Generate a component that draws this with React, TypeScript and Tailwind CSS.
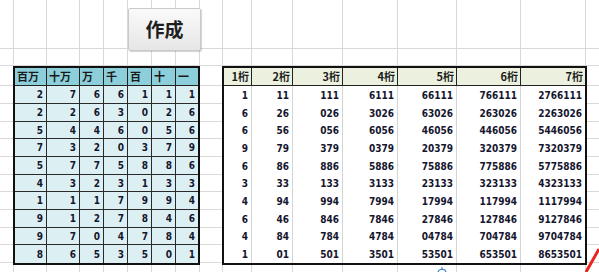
import React from "react";

// spreadsheet column widths (px) — lines sit on the last pixel of each cell
const sheetCols = [
  "w-[14px]", "w-[33px]", "w-[33px]", "w-[24px]", "w-[24px]", "w-[24px]", "w-[24px]", "w-[24px]",
  "w-[23px]", "w-[29px]", "w-[41px]", "w-[50px]", "w-[55px]", "w-[59px]", "w-[64px]", "w-[65px]",
];

const rowH = [
  "h-[18px]", "h-[18px]", "h-[17px]", "h-[18px]", "h-[18px]",
  "h-[17px]", "h-[18px]", "h-[18px]", "h-[17px]", "h-[18px]",
];

const leftCols = ["w-[32px]", "w-[33px]", "w-[24px]", "w-[24px]", "w-[24px]", "w-[24px]", "w-[22px]"];
const leftHead = ["百万", "十万", "万", "千", "百", "十", "一"];
const leftData = [
  [2, 7, 6, 6, 1, 1, 1],
  [2, 2, 6, 3, 0, 2, 6],
  [5, 4, 4, 6, 0, 5, 6],
  [7, 3, 2, 0, 3, 7, 9],
  [5, 7, 7, 5, 8, 8, 6],
  [4, 3, 2, 3, 1, 3, 3],
  [1, 1, 1, 7, 9, 9, 4],
  [9, 1, 2, 7, 8, 4, 6],
  [9, 7, 0, 4, 7, 8, 4],
  [8, 6, 5, 3, 5, 0, 1],
];

const rightCols = ["w-[28px]", "w-[41px]", "w-[50px]", "w-[55px]", "w-[59px]", "w-[64px]", "w-[64px]"];
const rightHead = ["1桁", "2桁", "3桁", "4桁", "5桁", "6桁", "7桁"];

// 1桁 … 7桁 are the digits read from the right
const rightData = leftData.map((r) => {
  const s = r.join("");
  return [1, 2, 3, 4, 5, 6, 7].map((n) => s.slice(7 - n));
});

const jp = "font-['Noto_Sans_CJK_JP','Noto_Sans_CJK_SC',sans-serif]";
const num = "font-['DejaVu_Sans_Condensed','DejaVu_Sans',sans-serif] text-[10px] font-bold text-[#15152e]";

function GrayRow({ h }: { h: string }) {
  return (
    <div className={`flex ${h} border-b border-[#d9d9d9]`}>
      {sheetCols.map((w, i) => (
        <div key={i} className={`${w} shrink-0 h-full border-r border-[#d9d9d9]`} />
      ))}
      <div className="flex-1" />
    </div>
  );
}

function GrayCol({ w }: { w: string }) {
  return (
    <div className={`${w} shrink-0 flex flex-col`}>
      <div className="h-[20px] shrink-0 border-b border-[#d9d9d9]" />
      {rowH.map((h, i) => (
        <div key={i} className={`${h} shrink-0 border-b border-[#d9d9d9]`} />
      ))}
      <div className="flex-1" />
    </div>
  );
}

export default function App() {
  return (
    <div className="w-[599px] h-[272px] overflow-hidden bg-white relative select-none">
      {/* top rows + button */}
      <div className="relative">
        <GrayRow h="h-[49px]" />
        <GrayRow h="h-[17px]" />
        <button
          className={`absolute left-[128px] top-[8px] w-[73px] h-[43px] rounded-[2px] border border-[#cacaca] bg-gradient-to-b from-[#fafafa] to-[#e6e6e6] shadow-[1px_1px_1px_rgba(0,0,0,0.18)] flex items-center justify-center text-[19px] font-bold text-[#1e1e1e] ${jp}`}
        >
          作成
        </button>
      </div>

      {/* tables */}
      <div className="flex h-[199px]">
        <GrayCol w="w-[13px]" />

        {/* left table: digit split */}
        <div className="w-[187px] h-full shrink-0 border-2 border-[#111] flex flex-col">
          <div className="flex h-[18px] shrink-0 border-b border-[#222] bg-[#8dcedb]">
            {leftHead.map((t, i) => (
              <div
                key={i}
                className={`${leftCols[i]} shrink-0 h-full flex items-center pl-[2px] text-[11px] font-bold text-[#1a1a1a] ${jp} ${i < 6 ? "border-r border-[#222]" : ""}`}
              >
                {t}
              </div>
            ))}
          </div>
          {leftData.map((r, ri) => (
            <div
              key={ri}
              className={`flex ${rowH[ri]} shrink-0 bg-[#dcf0f4] ${ri < 9 ? "border-b border-[#2a2a2a]" : ""}`}
            >
              {r.map((v, i) => (
                <div
                  key={i}
                  className={`${leftCols[i]} shrink-0 h-full flex items-center justify-end pr-[3px] ${num} ${i < 6 ? "border-r border-[#2a2a2a]" : ""}`}
                >
                  {v}
                </div>
              ))}
            </div>
          ))}
        </div>

        <GrayCol w="w-[22px]" />

        {/* right table: trailing digits */}
        <div className="w-[365px] h-full shrink-0 border-2 border-[#111] flex flex-col">
          <div className="flex h-[18px] shrink-0 border-b border-[#222] bg-[#ebf1de]">
            {rightHead.map((t, i) => (
              <div
                key={i}
                className={`${rightCols[i]} shrink-0 h-full flex items-center justify-end pr-[2px] text-[11px] font-bold text-[#1a1a1a] ${jp} ${i < 6 ? "border-r border-[#222]" : ""}`}
              >
                {t}
              </div>
            ))}
          </div>
          {rightData.map((r, ri) => (
            <div key={ri} className={`flex ${rowH[ri]} shrink-0 bg-white`}>
              {r.map((v, i) => (
                <div
                  key={i}
                  className={`${rightCols[i]} shrink-0 h-full flex items-center justify-end pr-[3px] ${num} ${i < 6 ? "border-r border-[#d4d4d4]" : ""}`}
                >
                  {v}
                </div>
              ))}
            </div>
          ))}
        </div>

        <div className="flex-1">
          <GrayCol w="w-full" />
        </div>
      </div>

      <GrayRow h="h-[18px]" />

      {/* stray drawing bits at the bottom edge */}
      <svg className="absolute left-[436px] top-[266px]" width="12" height="8" viewBox="0 0 12 8">
        <path d="M2 7 C2 2, 10 2, 10 7" fill="none" stroke="#3b7fd0" strokeWidth="1.2" />
        <path d="M6 1 L6 4" stroke="#3b7fd0" strokeWidth="1" />
      </svg>
      <svg className="absolute left-[584px] top-[246px]" width="15" height="26" viewBox="0 0 15 26">
        <path d="M2 26 L15 3" stroke="#e8261f" strokeWidth="3" />
      </svg>
    </div>
  );
}
